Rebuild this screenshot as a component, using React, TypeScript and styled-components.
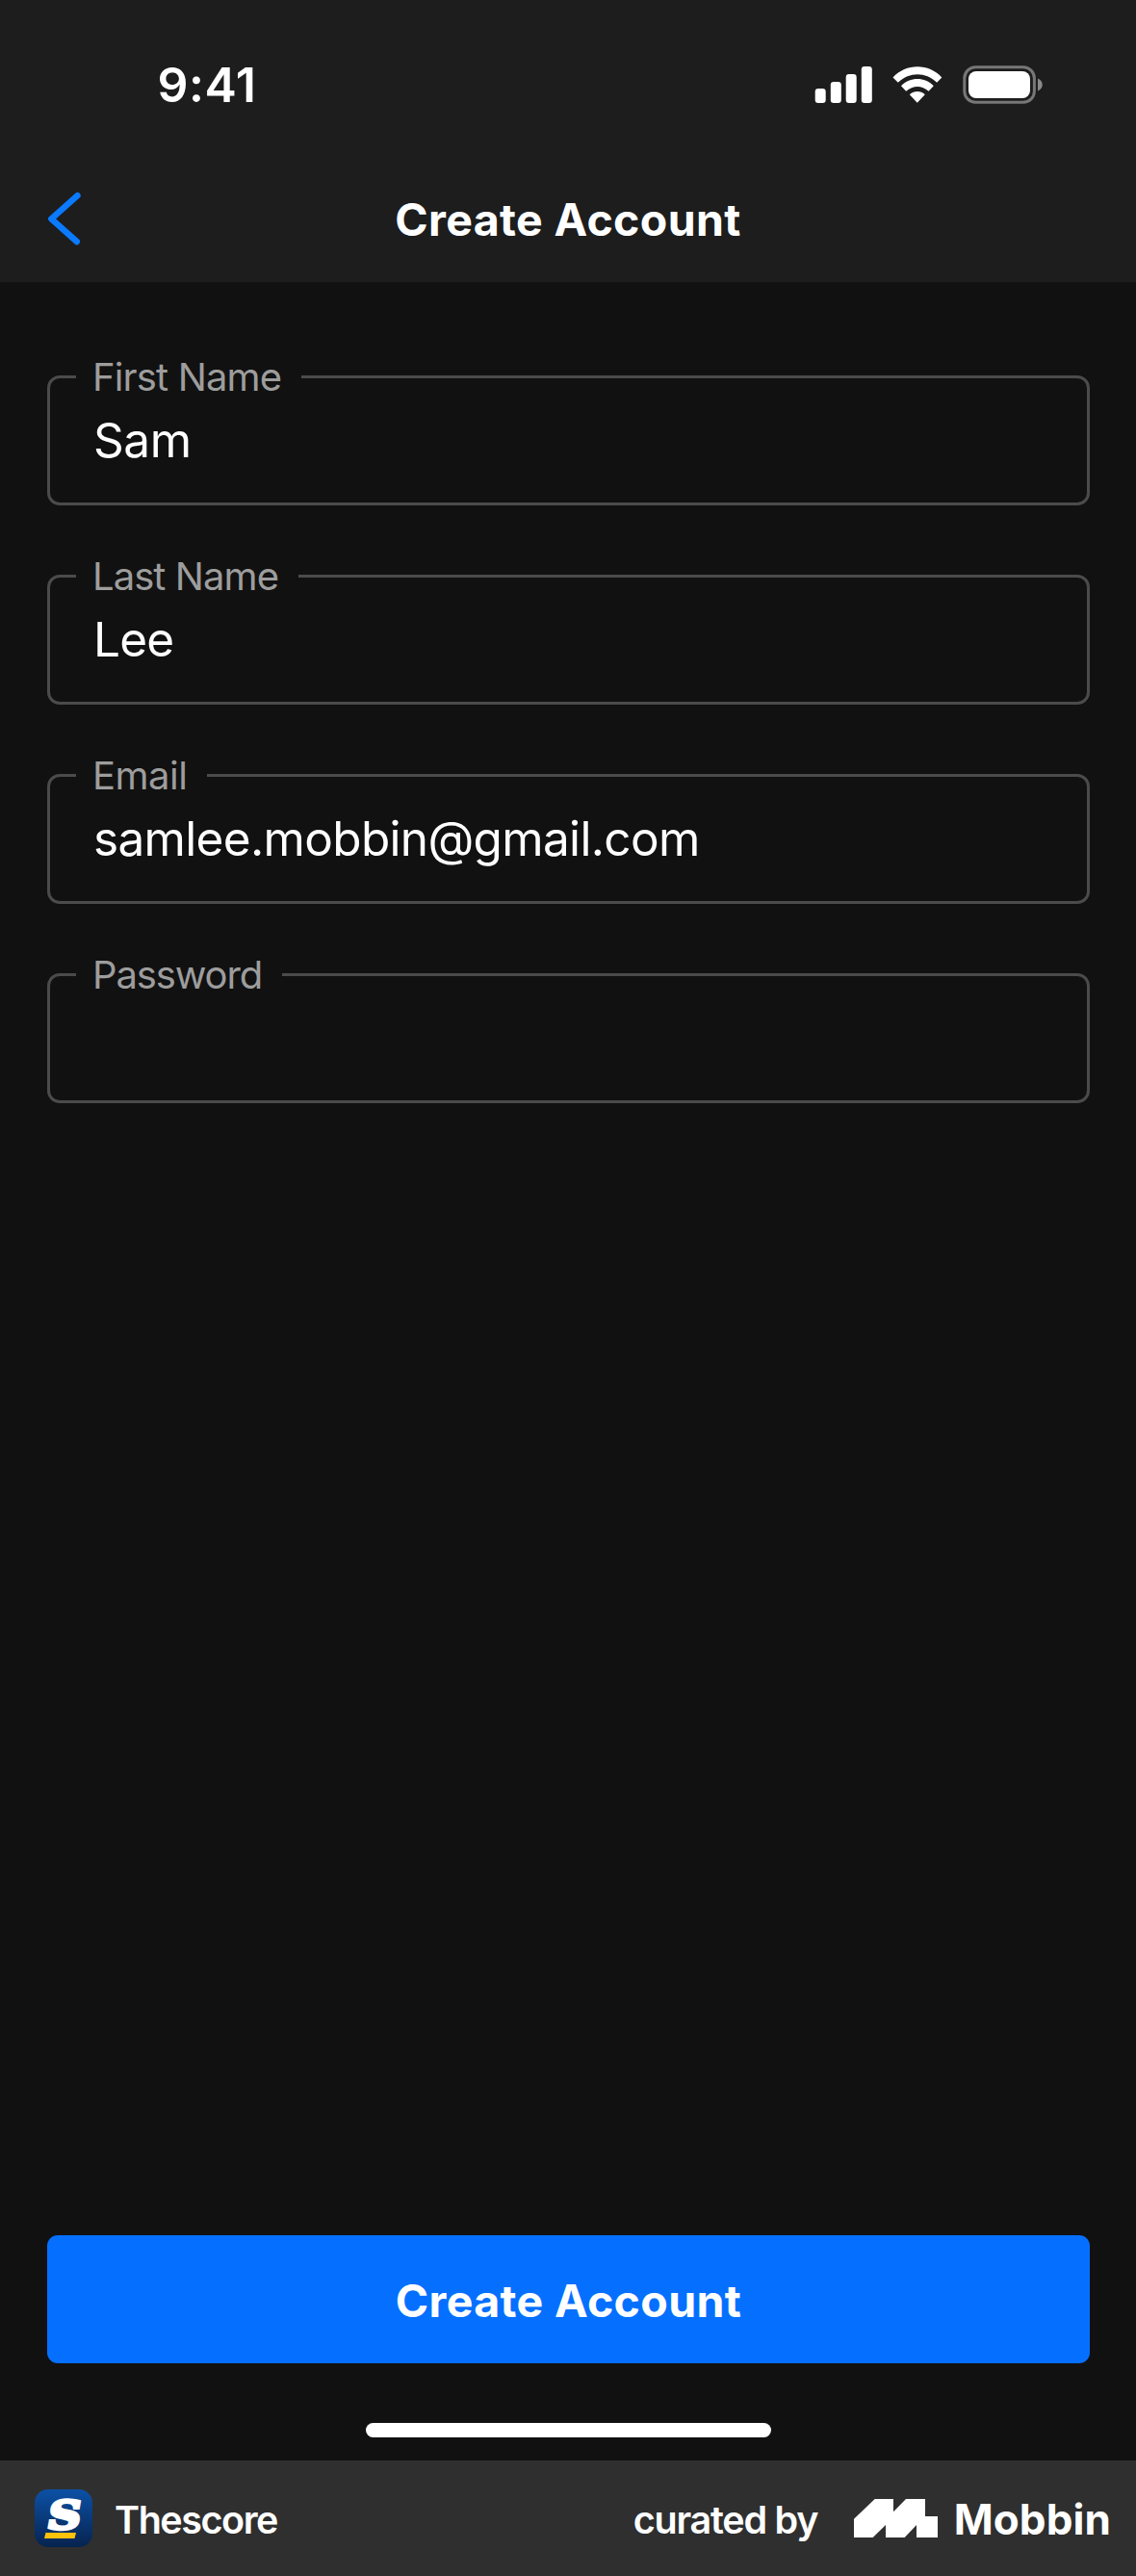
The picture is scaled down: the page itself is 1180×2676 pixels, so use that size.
import React from "react";
import styled, { createGlobalStyle } from "styled-components";

const GlobalStyle = createGlobalStyle`
  * { box-sizing: border-box; }
  body { margin: 0; background: #111111; }
`;

const Screen = styled.div`
  display: flex;
  flex-direction: column;
  width: 1180px;
  height: 2676px;
  background: #111111;
  color: #ffffff;
  font-family: Inter, "Liberation Sans", sans-serif;
`;

const Header = styled.header`
  height: 293px;
  background: #1d1d1e;
  box-shadow: 0 1px 3px #161616;
`;

const StatusBar = styled.div`
  display: flex;
  align-items: center;
  justify-content: space-between;
  height: 176px;
  padding: 0 97px 0 163.5px;
`;

const Time = styled.span`
  font-size: 50px;
  font-weight: 600;
  line-height: 60px;
  letter-spacing: 0.5px;
`;

const StatusIcons = styled.svg`
  display: block;
  width: 240px;
  height: 44px;
`;

const NavBar = styled.div`
  display: grid;
  grid-template-columns: 120px 1fr 120px;
  align-items: center;
  height: 104px;
`;

const BackButton = styled.button`
  display: block;
  border: 0;
  padding: 0 0 2px 46px;
  background: none;
  svg { display: block; }
`;

const Title = styled.h1`
  margin: 0;
  font-size: 46.5px;
  font-weight: 700;
  line-height: 60px;
  text-align: center;
  letter-spacing: 0.35px;
`;

const Form = styled.main`
  display: flex;
  flex: 1;
  flex-direction: column;
  padding: 73px 48px 0 49px;
`;

const Field = styled.fieldset`
  height: 159px;
  min-width: 0;
  margin: 0 0 48px;
  padding: 0 45px;
  border: 3px solid #4b4b4b;
  border-radius: 13px;
`;

const Label = styled.legend<{ $tracking: number }>`
  height: 50px;
  margin-left: -18px;
  padding: 1px 20.5px 0 17px;
  color: #9d9d9d;
  font-size: 40px;
  line-height: 50px;
  letter-spacing: ${(p) => p.$tracking}px;
`;

const Value = styled.div<{ $tracking: number }>`
  font-size: 49.5px;
  line-height: 60px;
  margin-top: 11px;
  letter-spacing: ${(p) => p.$tracking}px;
`;

const Submit = styled.button`
  height: 133px;
  margin-top: auto;
  border: 0;
  padding: 3px 0 0;
  border-radius: 11px;
  background: #0570ff;
  color: #ffffff;
  font: 700 46.5px/60px Inter, "Liberation Sans", sans-serif;
  letter-spacing: 0.35px;
`;

const HomeArea = styled.div`
  display: flex;
  justify-content: center;
  height: 101px;
  padding-top: 62px;
`;

const HomeIndicator = styled.div`
  width: 421px;
  height: 15px;
  border-radius: 8px;
  background: #ffffff;
`;

const Footer = styled.footer`
  display: flex;
  align-items: center;
  height: 120px;
  padding: 0 26px 0 36px;
  background: #2f2f2f;
`;

const AppIcon = styled.svg`
  display: block;
  width: 60px;
  height: 60px;
`;

const FooterText = styled.span`
  padding-top: 3px;
  font-size: 39.5px;
  font-weight: 600;
  line-height: 56px;
`;

const AppName = styled(FooterText)`
  margin-left: 23px;
  letter-spacing: -1.45px;
`;

const Curated = styled(FooterText)`
  margin-left: auto;
  letter-spacing: -1.25px;
`;

const MobbinMark = styled.svg`
  display: block;
  width: 87px;
  height: 40px;
  margin: 0 17px 0 37.4px;
`;

const MobbinName = styled.span`
  padding-top: 1px;
  font-size: 44px;
  font-weight: 700;
  line-height: 56px;
  letter-spacing: 0.1px;
`;

const fields = [
  { label: "First Name", value: "Sam", labelTracking: -0.86, valueTracking: -0.45 },
  { label: "Last Name", value: "Lee", labelTracking: -0.94, valueTracking: -0.8 },
  { label: "Email", value: "samlee.mobbin@gmail.com", labelTracking: -0.5, valueTracking: -0.67 },
  { label: "Password", value: "", labelTracking: -1.13, valueTracking: 0 },
];

export default function App() {
  return (
    <Screen>
      <GlobalStyle />
      <Header>
        <StatusBar>
          <Time>9:41</Time>
          <StatusIcons viewBox="843 66 240 44" fill="#fff">
            <rect x="846.7" y="92" width="11" height="15" rx="3.2" />
            <rect x="862.8" y="85" width="11" height="22" rx="3.2" />
            <rect x="878.7" y="77" width="11" height="30" rx="3.2" />
            <rect x="894.8" y="69" width="11" height="38" rx="3.2" />
            <path d="M927.5 80.5 C941 65.5 965 65.5 978.3 80.5 L973.2 85.7 C961 74.5 945 74.5 932.8 85.7Z" />
            <path d="M936 89.2 C945.5 79.7 960.5 79.7 969.8 89.2 L964.6 94.8 C957.5 88.4 948.5 88.4 941.2 94.8Z" />
            <path d="M944.8 98.3 C949.5 94 956.5 94 960.8 98.3 L952.8 106.8Z" />
            <rect x="1001.8" y="69.7" width="72.6" height="36.6" rx="11.5" fill="none" stroke="#777" strokeWidth="3" />
            <rect x="1006" y="74" width="64" height="28" rx="8" />
            <path d="M1078 81.5 C1084.3 84 1084.3 92 1078 94.5Z" fill="#8a8a8a" />
          </StatusIcons>
        </StatusBar>
        <NavBar>
          <BackButton aria-label="Back">
            <svg width="44" height="60" viewBox="46 197 44 60" fill="none" stroke="#0a7aff" strokeWidth="6.4" strokeLinecap="round" strokeLinejoin="round">
              <path d="M80.5 203.2 53.3 227.4 79.8 251" />
            </svg>
          </BackButton>
          <Title>Create Account</Title>
        </NavBar>
      </Header>
      <Form>
        {fields.map((f) => (
          <Field key={f.label}>
            <Label $tracking={f.labelTracking}>{f.label}</Label>
            <Value $tracking={f.valueTracking}>{f.value}</Value>
          </Field>
        ))}
        <Submit>Create Account</Submit>
      </Form>
      <HomeArea>
        <HomeIndicator />
      </HomeArea>
      <Footer>
        <AppIcon viewBox="0 0 60 60">
          <defs>
            <linearGradient id="sky" x1="0" y1="0" x2="0" y2="1">
              <stop offset="0" stopColor="#0c51a6" />
              <stop offset="1" stopColor="#06234f" />
            </linearGradient>
          </defs>
          <rect width="60" height="60" rx="14" fill="url(#sky)" />
          <text
            transform="translate(11.5 41) skewX(-10) scale(1.18 1)"
            fontFamily="DejaVu Serif, serif"
            fontWeight="700"
            fontSize="40.5"
            fill="#fff"
            stroke="#fff"
            strokeWidth="3.4"
          >
            S
          </text>
          <path d="M11.5 45H43L41.5 51H10Z" fill="#fdc20a" />
        </AppIcon>
        <AppName>Thescore</AppName>
        <Curated>curated by</Curated>
        <MobbinMark viewBox="0 0 87 40" fill="#fff">
          <path d="M0 20.7 21.7 0H41V13.3L54 0H74V18H87V40H65V27L52.7 40H33V27L19.7 40H0Z" />
        </MobbinMark>
        <MobbinName>Mobbin</MobbinName>
      </Footer>
    </Screen>
  );
}
